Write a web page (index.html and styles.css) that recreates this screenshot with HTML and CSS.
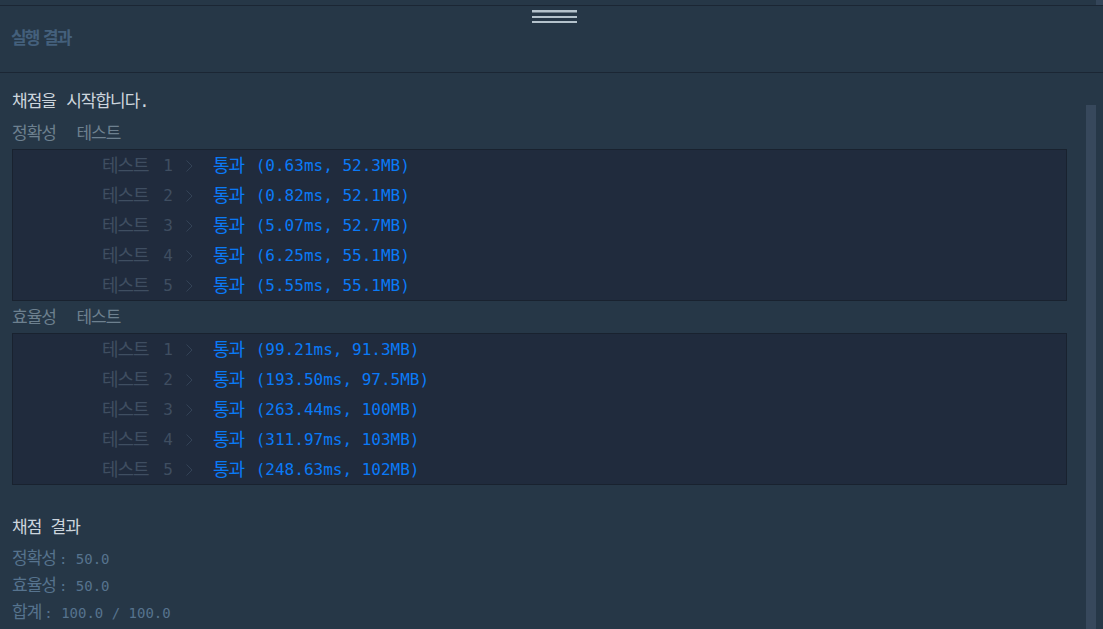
FILE: index.html
```html
<!DOCTYPE html>
<html lang="ko">
<head>
<meta charset="utf-8">
<title>실행 결과</title>
<link rel="stylesheet" href="styles.css">
</head>
<body>
<div class="panel">
  <div class="topstrip"><span class="outer-thumb"></span></div>
  <header class="head">
    <svg class="handle" width="45" height="13" viewBox="0 0 45 13">
      <rect x="0" y="0" width="45" height="2.5" fill="#b4c2cc"/>
      <rect x="0" y="6" width="45" height="2" fill="#b4c2cc"/>
      <rect x="0" y="11" width="45" height="2" fill="#b4c2cc"/>
    </svg>
    <h2 class="title">실행 결과</h2>
  </header>
  <section class="console">
    <div class="scroll-thumb"></div>
    <p class="line start">채점을 시작합니다.</p>
    <p class="label">정확성&nbsp;&nbsp;테스트</p>
    <div class="box">
      <div class="row"><span class="t-title"><span class="kr">테스트</span> 1</span><svg class="chev" width="7" height="12" viewBox="0 0 7 12"><polyline points="0.5,0.5 6,6 0.5,11.5" fill="none" stroke="#334256" stroke-width="1"/></svg><span class="res"><span class="kr pass">통과</span> (0.63ms, 52.3MB)</span></div>
      <div class="row"><span class="t-title"><span class="kr">테스트</span> 2</span><svg class="chev" width="7" height="12" viewBox="0 0 7 12"><polyline points="0.5,0.5 6,6 0.5,11.5" fill="none" stroke="#334256" stroke-width="1"/></svg><span class="res"><span class="kr pass">통과</span> (0.82ms, 52.1MB)</span></div>
      <div class="row"><span class="t-title"><span class="kr">테스트</span> 3</span><svg class="chev" width="7" height="12" viewBox="0 0 7 12"><polyline points="0.5,0.5 6,6 0.5,11.5" fill="none" stroke="#334256" stroke-width="1"/></svg><span class="res"><span class="kr pass">통과</span> (5.07ms, 52.7MB)</span></div>
      <div class="row"><span class="t-title"><span class="kr">테스트</span> 4</span><svg class="chev" width="7" height="12" viewBox="0 0 7 12"><polyline points="0.5,0.5 6,6 0.5,11.5" fill="none" stroke="#334256" stroke-width="1"/></svg><span class="res"><span class="kr pass">통과</span> (6.25ms, 55.1MB)</span></div>
      <div class="row"><span class="t-title"><span class="kr">테스트</span> 5</span><svg class="chev" width="7" height="12" viewBox="0 0 7 12"><polyline points="0.5,0.5 6,6 0.5,11.5" fill="none" stroke="#334256" stroke-width="1"/></svg><span class="res"><span class="kr pass">통과</span> (5.55ms, 55.1MB)</span></div>
    </div>
    <p class="label">효율성&nbsp;&nbsp;테스트</p>
    <div class="box">
      <div class="row"><span class="t-title"><span class="kr">테스트</span> 1</span><svg class="chev" width="7" height="12" viewBox="0 0 7 12"><polyline points="0.5,0.5 6,6 0.5,11.5" fill="none" stroke="#334256" stroke-width="1"/></svg><span class="res"><span class="kr pass">통과</span> (99.21ms, 91.3MB)</span></div>
      <div class="row"><span class="t-title"><span class="kr">테스트</span> 2</span><svg class="chev" width="7" height="12" viewBox="0 0 7 12"><polyline points="0.5,0.5 6,6 0.5,11.5" fill="none" stroke="#334256" stroke-width="1"/></svg><span class="res"><span class="kr pass">통과</span> (193.50ms, 97.5MB)</span></div>
      <div class="row"><span class="t-title"><span class="kr">테스트</span> 3</span><svg class="chev" width="7" height="12" viewBox="0 0 7 12"><polyline points="0.5,0.5 6,6 0.5,11.5" fill="none" stroke="#334256" stroke-width="1"/></svg><span class="res"><span class="kr pass">통과</span> (263.44ms, 100MB)</span></div>
      <div class="row"><span class="t-title"><span class="kr">테스트</span> 4</span><svg class="chev" width="7" height="12" viewBox="0 0 7 12"><polyline points="0.5,0.5 6,6 0.5,11.5" fill="none" stroke="#334256" stroke-width="1"/></svg><span class="res"><span class="kr pass">통과</span> (311.97ms, 103MB)</span></div>
      <div class="row"><span class="t-title"><span class="kr">테스트</span> 5</span><svg class="chev" width="7" height="12" viewBox="0 0 7 12"><polyline points="0.5,0.5 6,6 0.5,11.5" fill="none" stroke="#334256" stroke-width="1"/></svg><span class="res"><span class="kr pass">통과</span> (248.63ms, 102MB)</span></div>
    </div>
    <p class="line summary-title">채점 결과</p>
    <p class="score"><span class="ko">정확성</span>: 50.0</p>
    <p class="score"><span class="ko">효율성</span>: 50.0</p>
    <p class="score"><span class="ko">합계</span>: 100.0 / 100.0</p>
  </section>
</div>
</body>
</html>
```

FILE: styles.css
```css
html, body {
  margin: 0;
  padding: 0;
  background: #263747;
  height: 100%;
  overflow: hidden;
}

.panel {
  position: relative;
  width: 1103px;
  height: 629px;
  background: #263747;
  overflow: hidden;
}

.topstrip {
  position: relative;
  height: 5px;
  border-bottom: 1px solid #1b2634;
}

.outer-thumb {
  position: absolute;
  right: 0;
  top: 0;
  width: 7px;
  height: 5px;
  background: #344559;
}

.head {
  height: 67px;
  border-bottom: 1px solid #1b2634;
  padding-top: 4px;
  box-sizing: border-box;
  display: flex;
  flex-direction: column;
}

.handle {
  display: block;
  align-self: center;
  margin-left: 6px;
}

.title {
  margin: 4px 0 0 11px;
  font-family: "Noto Sans CJK KR", "Noto Sans", sans-serif;
  font-weight: 700;
  font-size: 17px;
  line-height: 19px;
  letter-spacing: -2px;
  word-spacing: 2px;
  color: #44607c;
}

.console {
  position: relative;
  padding: 12px 36px 0 12px;
  font-family: "DejaVu Sans Mono", "Noto Sans CJK KR", monospace;
}

.scroll-thumb {
  position: absolute;
  right: 7px;
  top: 32px;
  width: 10px;
  height: 600px;
  background: #37485c;
}

.line {
  margin: 0;
  font-size: 17px;
  letter-spacing: -1px;
  line-height: 32px;
  height: 32px;
  color: #cdd5dd;
}

.start {
  word-spacing: 1px;
}

.label {
  margin: 0;
  font-size: 17px;
  letter-spacing: -1px;
  line-height: 32px;
  height: 32px;
  color: #6d808f;
  word-spacing: 1px;
}

.label, .line, .score {
  white-space: pre;
}

.box {
  background: #202b3d;
  border: 1px solid #19222f;
  padding: 0;
}

.row {
  display: flex;
  align-items: center;
  height: 30px;
  box-sizing: border-box;
  padding: 2px 0 0 89px;
  font-size: 16px;
  line-height: 28px;
  white-space: pre;
}

.kr {
  font-size: 18px;
  letter-spacing: -1px;
  vertical-align: -1px;
}

.t-title {
  color: #3f4e61;
  word-spacing: 5px;
}

.chev {
  display: block;
  margin-left: 13px;
  margin-top: 0;
}

.res {
  margin-left: 20px;
  color: #0a7af7;
}

.pass {
  margin-right: 2px;
}

.summary-title {
  margin-top: 26px;
}

.score {
  margin: 0;
  font-size: 14px;
  line-height: 27px;
  height: 27px;
  color: #56738e;
}

.summary-title + .score {
  margin-top: 2px;
}

.ko {
  font-size: 17px;
  letter-spacing: -1px;
  line-height: 27px;
  margin-right: 3px;
}
```
